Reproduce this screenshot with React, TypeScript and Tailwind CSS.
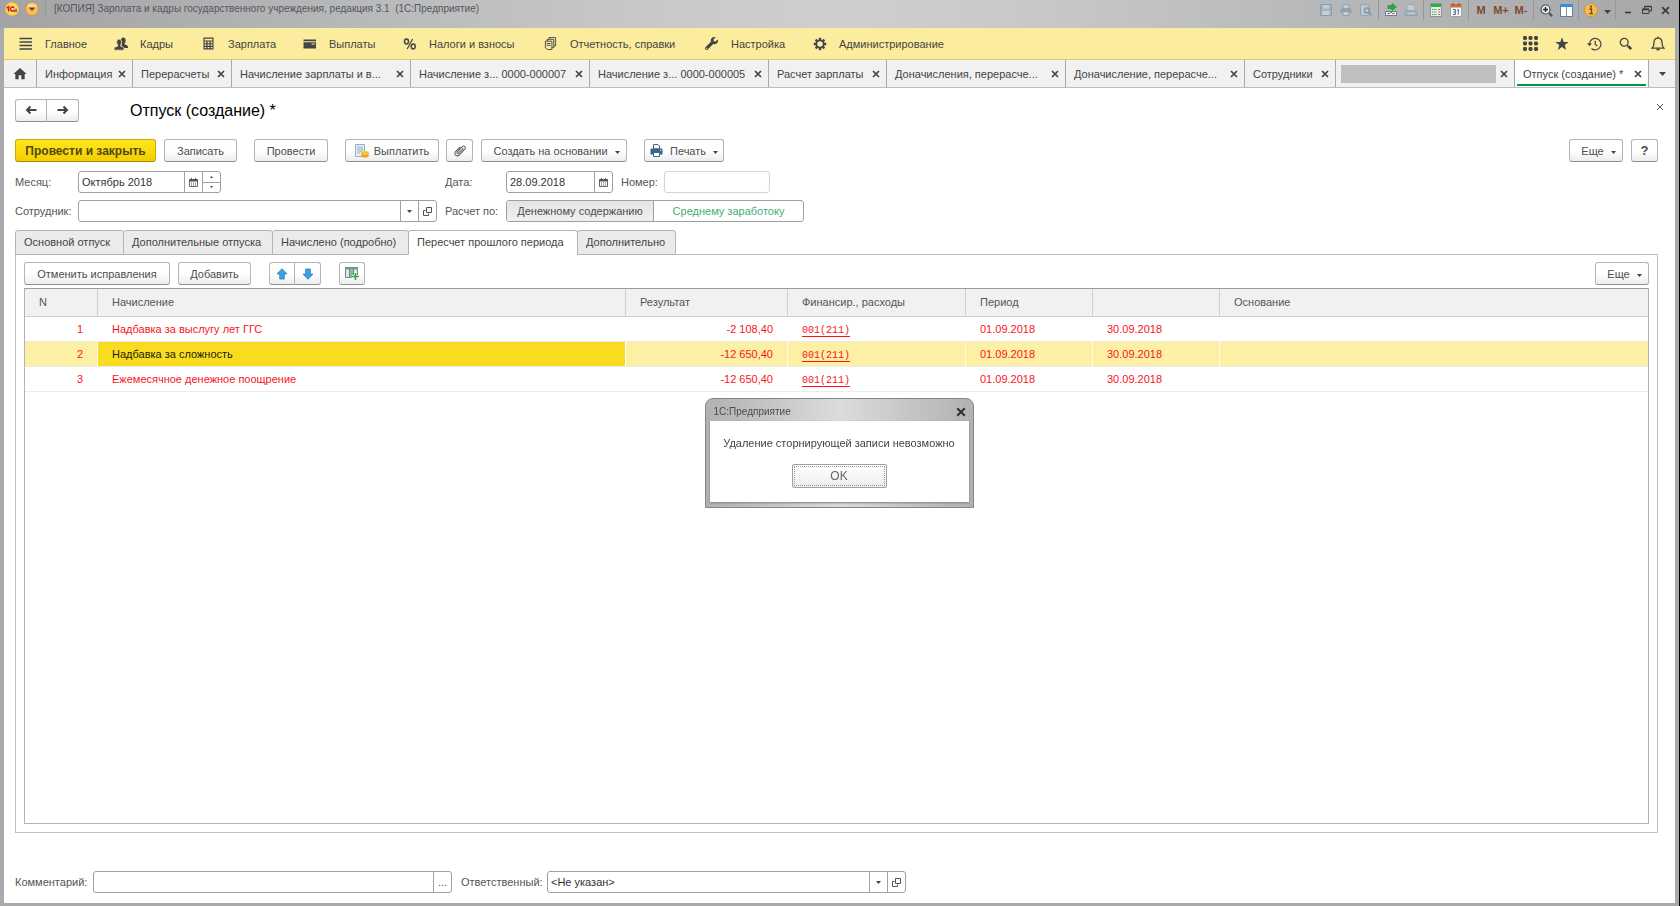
import clsx from "clsx";
import { useState, type ReactNode } from "react";
import { FaWrench } from "react-icons/fa";
import { MdHome } from "react-icons/md";

const menuItems = [
  { title: "Главное", icon: <LinesIcon />, width: "w-[95px]" },
  { title: "Кадры", icon: <PeopleIcon />, width: "w-[88px]" },
  { title: "Зарплата", icon: <CalcIcon />, width: "w-[101px]" },
  { title: "Выплаты", icon: <CardIcon />, width: "w-[100px]" },
  { title: "Налоги и взносы", icon: <PercentIcon />, width: "w-[141px]" },
  { title: "Отчетность, справки", icon: <DocsIcon />, width: "w-[161px]" },
  { title: "Настройка", icon: <FaWrench className="h-[13px] w-[13px]" />, width: "w-[108px]" },
  { title: "Администрирование", icon: <GearIcon />, width: "w-[160px]" },
];

const openWindows = [
  { title: "Информация", width: "w-24" },
  { title: "Перерасчеты", width: "w-[99px]" },
  { title: "Начисление зарплаты и в...", width: "w-[179px]" },
  { title: "Начисление з... 0000-000007", width: "w-[179px]" },
  { title: "Начисление з... 0000-000005", width: "w-[179px]" },
  { title: "Расчет зарплаты", width: "w-[118px]" },
  { title: "Доначисления, перерасче...", width: "w-[179px]" },
  { title: "Доначисление, перерасче...", width: "w-[179px]" },
  { title: "Сотрудники", width: "w-[91px]" },
  { title: "", width: "w-[179px]" },
  { title: "Отпуск (создание) *", width: "w-[134px]", active: true },
];

const pages = [
  { title: "Основной отпуск", width: "w-[109px]" },
  { title: "Дополнительные отпуска", width: "w-[150px]" },
  { title: "Начислено (подробно)", width: "w-[137px]" },
  { title: "Пересчет прошлого периода", width: "w-[170px]" },
  { title: "Дополнительно", width: "w-[99px]" },
];

const rows = [
  { n: 1, name: "Надбавка за выслугу лет ГГС", sum: "-2 108,40" },
  { n: 2, name: "Надбавка за сложность", sum: "-12 650,40" },
  { n: 3, name: "Ежемесячное денежное поощрение", sum: "-12 650,40" },
];

function LinesIcon() {
  return (
    <svg viewBox="0 0 14 14" className="h-3.5 w-3.5" stroke="currentColor" strokeWidth="1.6">
      <path d="M0.5 1.5h12.5M0.5 5h12.5M0.5 8.5h12.5M0.5 12h12.5" />
    </svg>
  );
}

function PeopleIcon() {
  return (
    <svg viewBox="0 0 14 14" className="h-3.5 w-3.5" fill="currentColor">
      <ellipse cx="9.3" cy="3.4" rx="2.3" ry="2.9" />
      <path d="M8.2 5h2.4v2.200l2.600 1.300q.8.400.8 1.300v1.200H7z" />
      <g stroke="#fbec9e" strokeWidth="0.8">
        <path d="M3.900 7h2.400v2l2.900 1.200q.8.400.8 1.300v1.700H0.100v-1.700q0-.9.8-1.300L3.900 9z" />
        <ellipse cx="5.100" cy="5.200" rx="2.500" ry="3.100" />
      </g>
      <path d="M4 6.500h2.200v3H4z" />
    </svg>
  );
}

function CalcIcon() {
  return (
    <svg viewBox="0 0 12 14" className="ml-px h-[13px] w-[11px]" fill="currentColor">
      <path
        fillRule="evenodd"
        d="M0.5 0.5h11v13h-11zM1.7 1.7v2h8.6v-2zM1.7 4.9v1.7h1.9v-1.7zM5 4.9v1.7h2v-1.7zM8.4 4.9v1.7h1.9v-1.7zM1.7 7.8v1.7h1.9v-1.7zM5 7.8v1.7h2v-1.7zM8.4 7.8v1.7h1.9v-1.7zM1.7 10.7v1.6h1.9v-1.6zM5 10.7v1.6h2v-1.6zM8.4 10.7v1.6h1.9v-1.6z"
      />
    </svg>
  );
}

function CardIcon() {
  return (
    <svg viewBox="0 0 14 14" className="h-3.5 w-3.5" fill="currentColor">
      <path d="M0.5 2.5h12.5v1.800h-12.5zM0.5 5.200h12.5v6.300h-12.5z" />
      <path d="M8.500 7h3.200" stroke="#fbec9e" strokeWidth="1" />
    </svg>
  );
}

function PercentIcon() {
  return (
    <svg viewBox="0 0 14 14" className="h-3.5 w-3.5" fill="none" stroke="currentColor">
      <ellipse cx="3.5" cy="4.5" rx="2" ry="2.400" strokeWidth="1.500" />
      <ellipse cx="10.2" cy="9.500" rx="2" ry="2.400" strokeWidth="1.500" />
      <path d="M9.600 2L4.200 12" strokeWidth="1.200" />
    </svg>
  );
}

function DocsIcon() {
  return (
    <svg viewBox="0 0 14 14" className="h-[13px] w-[13px]" fill="none" stroke="currentColor">
      <path d="M1.5 4.5h7v9h-5l-2-2z" />
      <path d="M3.5 4.5v-2h7v9h-2M5.5 2.5v-2h7v9h-2" />
      <path d="M3 7h4M3 9h4" />
    </svg>
  );
}

function GearIcon() {
  return (
    <svg viewBox="0 0 14 14" className="h-3.5 w-3.5" fill="none" stroke="currentColor">
      <circle cx="7" cy="7" r="3.700" strokeWidth="1.800" />
      <path
        strokeWidth="2.300"
        d="M7 0.800v2.500M7 10.700v2.500M0.800 7h2.500M10.700 7h2.500M2.600 2.600l1.800 1.800M9.600 9.600l1.800 1.800M11.400 2.600L9.600 4.400M4.400 9.600l-1.800 1.800"
      />
    </svg>
  );
}

function Caret({ className = "h-[3px] w-[5px]" }: { className?: string }) {
  return (
    <svg viewBox="0 0 5 3" preserveAspectRatio="none" className={clsx("shrink-0", className)} fill="#444">
      <path d="M0 0h5L2.5 3z" />
    </svg>
  );
}

function CrossIcon({ className }: { className: string }) {
  return (
    <svg viewBox="0 0 8 8" className={className} stroke="currentColor" fill="none">
      <path d="M1 1l6 6M7 1L1 7" />
    </svg>
  );
}

function CalendarIcon() {
  return (
    <svg viewBox="0 0 9 9" className="h-[9px] w-[9px]">
      <path d="M0.5 1.5h8v7h-8z" fill="#fff" stroke="#666" />
      <path d="M0.5 1h8v2.500h-8z" fill="#555" />
      <path d="M2.5 0v2M6.5 0v2" stroke="#555" />
      <path d="M2 5h1M4 5h1M6 5h1M2 7h1M4 7h1M6 7h1" stroke="#555" />
    </svg>
  );
}

function OpenIcon() {
  return (
    <svg viewBox="0 0 9 9" className="h-[9px] w-[9px]" fill="none" stroke="#555">
      <path d="M3.5 0.5h5v5h-5z" />
      <path d="M2.5 3.5h-2v5h5v-2" />
    </svg>
  );
}

function TitleBar() {
  const slot = "flex h-4 w-5 shrink-0 items-center justify-center";
  const separator = <span className="mx-[2px] h-5 w-px shrink-0 bg-[#969799]" />;

  return (
    <header className="flex h-7 items-start bg-[linear-gradient(90deg,#a3a3a5_0%,#b6b7b9_20%,#c8c8c8_38%,#cfcfcf_50%,#c8c8c8_62%,#b6b7b9_80%,#a6a7a9_100%)] pr-1 pl-[5px]">
      <svg viewBox="0 0 14 14" className="mt-[2px] h-3.5 w-3.5 shrink-0">
        <defs>
          <radialGradient id="logo">
            <stop offset="0" stopColor="#fff7a0" />
            <stop offset="1" stopColor="#f6cf3a" />
          </radialGradient>
        </defs>
        <circle cx="7" cy="7" r="6.8" fill="url(#logo)" />
        <path d="M1.8 6.2L3.6 4.800V9.400" fill="none" stroke="#d8181c" strokeWidth="1.500" />
        <path d="M9 5.900C8.400 4.500 5.500 4.700 5.500 7S7 9 8.300 9H12" fill="none" stroke="#d8181c" strokeWidth="1.500" />
        <path d="M8.300 7.200H12" stroke="#d8181c" strokeWidth=".7" />
      </svg>
      <button type="button" aria-label="Главное меню" className="mt-[2px] ml-[6px] shrink-0">
        <svg viewBox="0 0 14 14" className="h-3.5 w-3.5">
          <circle cx="7" cy="7" r="6.5" fill="#f5bd5c" stroke="#dc9a3c" />
          <ellipse cx="7" cy="4" rx="4.5" ry="2.5" fill="#fad998" />
          <path d="M3.8 5.5h6.4L7 9z" fill="#5f4317" />
        </svg>
      </button>
      <span className="ml-[6px] h-4 w-px bg-[#979797]" />
      <h1 className="ml-2 min-w-0 flex-1 truncate text-[10px] leading-[18px] whitespace-pre text-[#55575a]">
        [КОПИЯ] Зарплата и кадры государственного учреждения, редакция 3.1  (1С:Предприятие)
      </h1>
      <div className="flex items-center text-[#3c3c3c]">
        <button type="button" aria-label="Сохранить" className={slot}>
          <svg viewBox="0 0 12 12" className="h-3 w-3">
            <path d="M0.5 0.5h11v11h-11z" fill="#a3b3c0" stroke="#8b9dab" />
            <path d="M3 1h6v3.5H3zM2.5 7h7v4h-7z" fill="#c6ced5" />
          </svg>
        </button>
        <button type="button" aria-label="Печать" className={slot}>
          <svg viewBox="0 0 12 12" className="h-3 w-3">
            <path d="M3 0.5h6v4H3z" fill="#c6ced5" stroke="#8fa0ae" />
            <path d="M0.5 4.5h11V9h-11z" fill="#90a2b0" />
            <path d="M3 7.5h6v4H3z" fill="#c6ced5" stroke="#8fa0ae" />
          </svg>
        </button>
        <button type="button" aria-label="Предварительный просмотр" className={slot}>
          <svg viewBox="0 0 12 12" className="h-3 w-3" fill="none">
            <path d="M0.5 0.5H7l2 2v9H0.5z" fill="#c0c7cd" stroke="#96a4b0" />
            <circle cx="7" cy="6.5" r="2.5" stroke="#8496a5" strokeWidth="1.4" />
            <path d="M9 8.5l2.5 2.8" stroke="#8496a5" strokeWidth="1.6" />
          </svg>
        </button>
        {separator}
        <button type="button" aria-label="Получить ссылку" className={slot}>
          <svg viewBox="0 0 14 14" className="h-3.5 w-3.5">
            <path d="M1.5 8.5h11v4h-11z" fill="#eef2f4" stroke="#6f7c86" />
            <path d="M3.5 10.5h2l1-1h1l1 1h2" fill="none" stroke="#56636d" />
            <path d="M4 2.5h4v-2L12.5 4 8 7.5v-2H4z" fill="#1fb43a" stroke="#168a2b" strokeWidth=".6" />
          </svg>
        </button>
        <button type="button" aria-label="Перейти по ссылке" className={slot}>
          <svg viewBox="0 0 14 14" className="h-3.5 w-3.5">
            <path d="M3 1.5h6l2 2V8H3z" fill="#c4cbd1" stroke="#9aa8b3" />
            <path d="M1 8h12v4.500H1z" fill="#a8b4be" stroke="#91a0ac" />
            <path d="M4 10.5h6" stroke="#c9d0d5" />
          </svg>
        </button>
        {separator}
        <button type="button" aria-label="Калькулятор" className={slot}>
          <svg viewBox="0 0 12 14" className="h-3.5 w-3">
            <path d="M0.5 0.5h11v13h-11z" fill="#eceff0" stroke="#8d9599" />
            <path d="M1 1h10v3H1z" fill="#2fae4b" />
            <path d="M2 6.5h5M2 9h5M2 11.5h5" stroke="#4a8f5c" strokeDasharray="1.5 .7" />
            <path d="M8.3 6.5h2M8.3 9h2M8.3 11.5h2" stroke="#b3663f" />
          </svg>
        </button>
        <button type="button" aria-label="Календарь" className={slot}>
          <svg viewBox="0 0 12 14" className="h-3.5 w-3">
            <path d="M0.5 1.5h11v12h-11z" fill="#f7f8fa" stroke="#9aa4ad" />
            <path d="M0.5 1h11v3.5h-11z" fill="#c9713b" />
            <path d="M3 0v2.5M9 0v2.5" stroke="#8e4a22" />
            <path d="M3 6.5h2.300v5H3M3.500 9h1.800M7 7.500l1.300-1v5" fill="none" stroke="#4a6785" />
          </svg>
        </button>
        {separator}
        {["M", "M+", "M-"].map((title) => (
          <button
            key={title}
            type="button"
            className="h-4 w-5 text-[11px] leading-4 font-bold text-[#7d4a2b]"
          >
            {title}
          </button>
        ))}
        {separator}
        <button type="button" aria-label="Масштаб" className={slot}>
          <svg viewBox="0 0 13 13" className="h-[13px] w-[13px]" fill="none">
            <circle cx="5.5" cy="5.5" r="4.5" fill="#f2f3f4" stroke="#4b4f53" strokeWidth="1.2" />
            <path d="M3 5.5h5M5.5 3v5" stroke="#222" strokeWidth="1.4" />
            <path d="M9 9l3.2 3.2" stroke="#4b4f53" strokeWidth="2" />
          </svg>
        </button>
        <button type="button" aria-label="Разделить окно" className={slot}>
          <svg viewBox="0 0 13 13" className="h-[13px] w-[13px]">
            <path d="M0.5 0.5h12v12h-12z" fill="#fff" stroke="#5b7fa5" />
            <path d="M0.5 0.5h12V3h-12z" fill="#3590e0" />
            <path d="M6.5 3v9.5" stroke="#7c99b8" />
          </svg>
        </button>
        {separator}
        <button type="button" aria-label="О программе" className={slot}>
          <svg viewBox="0 0 14 14" className="h-3.5 w-3.5">
            <circle cx="7" cy="7" r="6.5" fill="#f3bb52" stroke="#d6952f" />
            <circle cx="7" cy="3.7" r="1.1" fill="#6b4a12" />
            <path d="M5.5 6h2v4.500M5.300 10.700h3.600" stroke="#6b4a12" strokeWidth="1.300" fill="none" />
          </svg>
        </button>
        <button type="button" aria-label="Еще" className="flex h-5 w-3 items-center justify-center pt-1">
          <Caret className="h-1 w-[7px]" />
        </button>
        {separator}
        <button type="button" aria-label="Свернуть" className="flex h-4 w-[19px] items-center justify-center">
          <svg viewBox="0 0 10 10" className="h-2.5 w-2.5" stroke="currentColor" strokeWidth="1.6">
            <path d="M2 7.5h6" />
          </svg>
        </button>
        <button type="button" aria-label="Восстановить" className="flex h-4 w-[19px] items-center justify-center">
          <svg viewBox="0 0 10 10" className="h-2.5 w-2.5" stroke="currentColor" fill="none">
            <path d="M0.5 4H7v4.500H0.500zM2.500 4V1.500h7V6H7" />
            <path d="M0.5 4.500H7M2.500 1.500h7" strokeWidth="1.600" />
          </svg>
        </button>
        <button type="button" aria-label="Закрыть" className="flex h-4 w-[19px] items-center justify-center">
          <CrossIcon className="h-[9px] w-[9px] [stroke-width:1.6]" />
        </button>
      </div>
    </header>
  );
}

function SectionsBar() {
  const tool = "flex w-8 items-center justify-center";

  return (
    <nav className="flex h-8 items-center justify-between border-b border-[#dccb6e] bg-[#fbec9e] pr-px pl-[15px] text-[#444]">
      <div className="flex">
        {menuItems.map((item) => (
          <button key={item.title} type="button" className={clsx("flex items-center whitespace-nowrap", item.width)}>
            <span className="flex w-[26px] shrink-0 items-center">{item.icon}</span>
            {item.title}
          </button>
        ))}
      </div>
      <div className="flex">
        <button type="button" aria-label="Меню функций" className={tool}>
          <svg viewBox="0 0 15 15" className="h-[15px] w-[15px]" fill="currentColor">
            {[0, 5.5, 11].map((y) =>
              [0, 5.5, 11].map((x) => <rect key={`${x}-${y}`} x={x} y={y} width="4" height="4" rx="1.4" />),
            )}
          </svg>
        </button>
        <button type="button" aria-label="Избранное" className={tool}>
          <svg viewBox="0 0 14 14" className="h-3.5 w-3.5" fill="currentColor">
            <path d="M7 0.3L8.700 5h5L9.700 8l1.500 5L7 10.100 2.800 13l1.500-5L.3 5h5z" />
          </svg>
        </button>
        <button type="button" aria-label="История" className={tool}>
          <svg viewBox="0 0 15 14" className="h-3.5 w-[15px]" fill="none" stroke="currentColor" strokeWidth="1.2">
            <path d="M2.5 7a5.700 5.700 0 1 1 2 4.500" />
            <path d="M8.2 3.800v3.600l2.200 1.500" />
            <path d="M0 6.200h5L2.500 9.200z" fill="currentColor" stroke="none" />
          </svg>
        </button>
        <button type="button" aria-label="Поиск" className={tool}>
          <svg viewBox="0 0 14 14" className="h-3.5 w-3.5" fill="none" stroke="currentColor">
            <circle cx="5.2" cy="5.2" r="3.900" strokeWidth="1.300" />
            <path d="M8 8l1.500 1.500" strokeWidth="1.400" />
            <path d="M9.200 9.200l3 3" strokeWidth="2.600" />
          </svg>
        </button>
        <button type="button" aria-label="Уведомления" className={tool}>
          <svg viewBox="0 0 14 15" className="h-[15px] w-3.5" fill="none" stroke="currentColor" strokeWidth="1.3">
            <path d="M1 12.200c1.800-1.400 2-2.900 2-5.400C3 4.200 4.500 2.200 7 2.200s4 2 4 4.600c0 2.500.2 4 2 5.400z" />
            <path d="M7 0.500V2" />
            <path d="M5.500 13.500h3" strokeWidth="1.800" />
          </svg>
        </button>
      </div>
    </nav>
  );
}

function WindowTabs() {
  return (
    <div className="flex h-7 border-b border-[#bdbdbd] bg-[#f1f1f1] text-[#444]">
      <button
        type="button"
        aria-label="Начальная страница"
        className="flex w-[33px] shrink-0 items-center justify-center border-r border-[#a9a9a9]"
      >
        <MdHome className="h-4 w-4" />
      </button>
      {openWindows.map((item, index) => (
        <div
          key={index}
          className={clsx(
            "relative flex shrink items-center justify-between border-r border-[#a9a9a9] pr-[5px] pl-2",
            item.width,
            item.active && "bg-white",
          )}
        >
          {item.title ? (
            <button type="button" className="whitespace-nowrap">
              {item.title}
            </button>
          ) : (
            <span className="-ml-[3px] h-[18px] w-[155px] bg-[#c0c0c0]" />
          )}
          <button type="button" aria-label="Закрыть вкладку" className="p-px">
            <CrossIcon className="h-2 w-2 [stroke-width:1.7]" />
          </button>
          {item.active && <span className="absolute inset-x-[2px] bottom-px h-[2px] bg-[#009646]" />}
        </div>
      ))}
      <button type="button" aria-label="Все вкладки" className="flex flex-1 items-center justify-center">
        <Caret className="h-1 w-[7px]" />
      </button>
    </div>
  );
}

type ButtonProps = {
  children: ReactNode;
  className?: string;
  label?: string;
  menu?: boolean;
  primary?: boolean;
};

function Button({ children, className, label, menu, primary }: ButtonProps) {
  return (
    <button
      type="button"
      aria-label={label}
      className={clsx(
        "flex h-[23px] shrink-0 items-center justify-center rounded-[3px] border whitespace-nowrap",
        primary
          ? "border-[#c9a800] border-b-[#a38a0c] bg-linear-to-b from-[#ffe61a] to-[#f3cf00] text-xs font-bold text-[#54480c]"
          : "border-[#b4b4b4] border-b-[#8f8f8f] bg-linear-to-b from-white from-50% to-[#ededed] text-[#4d4d4d]",
        className,
      )}
    >
      {children}
      {menu && <Caret className="mt-[3px] ml-[7px] h-[3px] w-[5px]" />}
    </button>
  );
}

type FieldProps = {
  id: string;
  value?: string;
  className: string;
  children?: ReactNode;
  muted?: boolean;
};

function Field({ id, value = "", className, children, muted }: FieldProps) {
  return (
    <div
      className={clsx(
        "flex h-[22px] shrink-0 overflow-hidden rounded-[3px] border bg-white",
        muted ? "border-[#d4d4d4]" : "border-[#a0a0a0]",
        className,
      )}
    >
      <input id={id} defaultValue={value} className="min-w-0 flex-1 px-[3px] text-[#333] outline-none" />
      {children}
    </div>
  );
}

function FieldButton({ label, children }: { label: string; children: ReactNode }) {
  return (
    <button
      type="button"
      aria-label={label}
      className="flex w-[18px] shrink-0 items-center justify-center border-l border-[#a0a0a0] text-[#555]"
    >
      {children}
    </button>
  );
}

function CommandBar() {
  return (
    <div className="mt-[18px] flex">
      <Button primary className="w-[141px]">
        Провести и закрыть
      </Button>
      <Button className="ml-2 w-[73px]">Записать</Button>
      <Button className="ml-[17px] w-[74px]">Провести</Button>
      <Button className="ml-[17px] w-[94px]">
        <svg viewBox="0 0 14 14" className="mr-[5px] h-3.5 w-3.5">
          <path d="M0.5 0.5h9v12h-9z" fill="#eaf3fa" stroke="#8fb0c8" />
          <path d="M2 3h6M2 5h6M2 7h6M2 9h3" stroke="#8fb0c8" />
          <ellipse cx="10" cy="11.5" rx="3.7" ry="2" fill="#e3a21a" />
          <ellipse cx="10" cy="9.5" rx="3.7" ry="2" fill="#f7c93e" stroke="#d99a1c" strokeWidth=".6" />
          <ellipse cx="8.500" cy="7.800" rx="2.200" ry="1.100" fill="#fde28a" stroke="#d99a1c" strokeWidth=".5" />
        </svg>
        Выплатить
      </Button>
      <Button label="Присоединенные файлы" className="ml-[7px] w-[27px]">
        <svg viewBox="0 0 14 14" className="h-3.5 w-3.5" fill="none" stroke="#666" strokeWidth="1.1">
          <path d="M10.3 4.3L5.600 9.200c-.9.900-2.200-.3-1.300-1.300l5-5.200c1.700-1.700 4.200.5 2.600 2.300L6.200 11c-2.300 2.300-5.900-.8-3.600-3.300L7.300 3" />
        </svg>
      </Button>
      <Button menu className="ml-2 w-[146px] pl-[5px]">
        Создать на основании
      </Button>
      <Button menu className="ml-[17px] w-20">
        <svg viewBox="0 0 13 13" className="mr-[7px] h-[13px] w-[13px]">
          <path d="M3.5 0.5H8L9.500 2v3h-6z" fill="#fff" stroke="#3c6489" />
          <path d="M0.5 5.500q0-1 1-1h10q1 0 1 1v5h-12z" fill="#3c6489" />
          <path d="M3.5 8.500h6v4h-6z" fill="#fff" stroke="#3c6489" />
          <path d="M10 6.200h1.200" stroke="#fff" />
        </svg>
        Печать
      </Button>
      <Button menu className="ml-auto w-[54px] pl-[5px]">
        Еще
      </Button>
      <Button className="ml-2 w-[27px] text-[13px] font-bold">?</Button>
    </div>
  );
}

function HeaderFields() {
  const [basis, setBasis] = useState("salary");

  return (
    <>
      <div className="mt-[9px] flex items-center gap-2">
        <div className="flex w-[422px] shrink-0 items-center">
          <label htmlFor="month" className="w-[63px]">
            Месяц:
          </label>
          <Field id="month" value="Октябрь 2018" className="w-[143px]">
            <FieldButton label="Выбрать месяц">
              <CalendarIcon />
            </FieldButton>
            <div className="flex w-[18px] flex-col border-l border-[#a0a0a0]">
              <button
                type="button"
                aria-label="Следующий месяц"
                className="flex flex-1 items-center justify-center border-b border-[#a0a0a0]"
              >
                <Caret className="h-[2px] w-[3px] rotate-180" />
              </button>
              <button type="button" aria-label="Предыдущий месяц" className="flex flex-1 items-center justify-center">
                <Caret className="h-[2px] w-[3px]" />
              </button>
            </div>
          </Field>
        </div>
        <div className="flex items-center">
          <label htmlFor="date" className="w-[61px]">
            Дата:
          </label>
          <Field id="date" value="28.09.2018" className="w-[107px]">
            <FieldButton label="Выбрать дату">
              <CalendarIcon />
            </FieldButton>
          </Field>
        </div>
        <div className="flex items-center">
          <label htmlFor="number" className="w-[43px]">
            Номер:
          </label>
          <Field id="number" muted className="w-[106px]" />
        </div>
      </div>
      <div className="mt-[7px] flex items-center gap-2">
        <div className="flex w-[422px] shrink-0 items-center">
          <label htmlFor="employee" className="w-[63px]">
            Сотрудник:
          </label>
          <Field id="employee" className="flex-1">
            <FieldButton label="Выбрать сотрудника">
              <Caret />
            </FieldButton>
            <FieldButton label="Открыть сотрудника">
              <OpenIcon />
            </FieldButton>
          </Field>
        </div>
        <fieldset className="flex items-center">
          <legend className="float-left w-[61px]">Расчет по:</legend>
          <div className="flex h-[22px] overflow-hidden rounded-[3px] border border-[#a0a0a0]">
            <label
              className={clsx(
                "flex w-[147px] items-center justify-center border-r border-[#a0a0a0]",
                basis === "salary" ? "bg-linear-to-b from-[#e4e4e4] to-[#f0f0f0] text-[#4d4d4d]" : "text-[#3fae73]",
              )}
            >
              <input
                type="radio"
                name="basis"
                className="sr-only"
                checked={basis === "salary"}
                onChange={() => setBasis("salary")}
              />
              Денежному содержанию
            </label>
            <label
              className={clsx(
                "flex w-[149px] items-center justify-center",
                basis === "average" ? "bg-linear-to-b from-[#e4e4e4] to-[#f0f0f0] text-[#4d4d4d]" : "text-[#3fae73]",
              )}
            >
              <input
                type="radio"
                name="basis"
                className="sr-only"
                checked={basis === "average"}
                onChange={() => setBasis("average")}
              />
              Среднему заработоку
            </label>
          </div>
        </fieldset>
      </div>
    </>
  );
}

function RecalcTable() {
  const [selected, setSelected] = useState(2);
  const head = "border-r border-b border-[#cfcfcf] px-[14px] pb-[2px] text-left font-normal last:border-r-0";
  const cell = "border-r border-b border-r-transparent border-b-[#ebebeb] px-[14px] last:border-r-0";

  return (
    <div className="mt-[3px] flex-1 border border-[#b3b3b3] border-t-[#9c9c9c]">
      <table className="w-full table-fixed border-separate border-spacing-0 whitespace-nowrap">
        <colgroup>
          <col className="w-[73px]" />
          <col className="w-[528px]" />
          <col className="w-[162px]" />
          <col className="w-[178px]" />
          <col className="w-[127px]" />
          <col className="w-[127px]" />
          <col />
        </colgroup>
        <thead className="bg-[#f1f1f1] text-[#555]">
          <tr className="h-7">
            <th className={head}>N</th>
            <th className={head}>Начисление</th>
            <th className={head}>Результат</th>
            <th className={head}>Финансир., расходы</th>
            <th className={head}>Период</th>
            <th className={head} />
            <th className={head}>Основание</th>
          </tr>
        </thead>
        <tbody className="text-[#f9131b]">
          {rows.map((row) => {
            const active = row.n === selected;
            const tone = active && "border-r-white/70! bg-[#fdf0a4]";
            return (
              <tr key={row.n} className="h-[25px]" onClick={() => setSelected(row.n)}>
                <td className={clsx(cell, tone, "text-right")}>{row.n}</td>
                <td className={clsx(cell, active && "border-r-white! bg-[#f9db20] text-[#1f1c05]")}>{row.name}</td>
                <td className={clsx(cell, tone, "text-right")}>{row.sum}</td>
                <td className={clsx(cell, tone)}>
                  <a
                    href="#financing"
                    className="inline-block border-b border-current font-['Liberation_Mono',monospace] text-[10px] leading-[11px]"
                  >
                    001(211)
                  </a>
                </td>
                <td className={clsx(cell, tone)}>01.09.2018</td>
                <td className={clsx(cell, tone)}>30.09.2018</td>
                <td className={clsx(cell, tone)} />
              </tr>
            );
          })}
        </tbody>
      </table>
    </div>
  );
}

function RecalcPage() {
  return (
    <section className="flex flex-1 flex-col border border-[#c0c0c0] px-2 pt-[7px] pb-2">
      <div className="flex">
        <Button className="w-[146px]">Отменить исправления</Button>
        <Button className="ml-2 w-[73px]">Добавить</Button>
        <div className="ml-[18px] flex">
          <Button label="Переместить вверх" className="w-[26px] rounded-r-none">
            <svg viewBox="0 0 12 12" className="h-3 w-3">
              <path d="M6 0.7L11 6H8.300v5H3.700V6H1z" fill="#3ba3e4" stroke="#2481bf" strokeWidth=".8" />
            </svg>
          </Button>
          <Button label="Переместить вниз" className="w-[26px] rounded-l-none border-l-0">
            <svg viewBox="0 0 12 12" className="h-3 w-3">
              <path d="M6 11.300L11 6H8.300V1H3.700v5H1z" fill="#3ba3e4" stroke="#2481bf" strokeWidth=".8" />
            </svg>
          </Button>
        </div>
        <Button label="Показать детали расчета" className="ml-[18px] w-[26px]">
          <svg viewBox="0 0 14 13" className="h-[13px] w-3.5">
            <path d="M0.5 0.5h12v10h-12z" fill="#dbe8ef" stroke="#6d8798" />
            <path d="M0.5 1h12v1.500h-12z" fill="#7e98a8" />
            <path d="M5 2.500h3.500v8H5z" fill="#7cc47f" />
            <path d="M4.500 1v9.500M8.500 1v9.500" stroke="#6d8798" />
            <path d="M10.500 5.500V13M7 9.500h7" stroke="#fff" strokeWidth="3" />
            <path d="M10.500 6v7M7 9.500h7" stroke="#2fa32f" strokeWidth="1.700" />
          </svg>
        </Button>
        <Button menu className="ml-auto w-[54px] pl-[5px]">
          Еще
        </Button>
      </div>
      <RecalcTable />
    </section>
  );
}

function MessageDialog({ onClose }: { onClose: () => void }) {
  return (
    <div className="fixed inset-0 flex items-center justify-center pr-[2px]">
      <div
        role="dialog"
        aria-label="1С:Предприятие"
        className="rounded-t-lg border border-[#858585] bg-[linear-gradient(90deg,#b0b1b3,#dcdcdc_50%,#b0b1b3)] px-1 pb-[5px]"
      >
        <div className="flex h-[22px] items-center justify-between pt-[3px] pr-[3px] pl-1 text-[10px] text-[#4a4a4a]">
          1С:Предприятие
          <button type="button" aria-label="Закрыть" onClick={onClose} className="text-[#2e2e2e]">
            <CrossIcon className="h-[10px] w-[10px] [stroke-width:1.6]" />
          </button>
        </div>
        <div className="flex h-[81px] w-[259px] flex-col items-center bg-white shadow-[0_1px_2px_#808080]">
          <p className="mt-[14px] leading-4 whitespace-nowrap text-[#444]">Удаление сторнирующей записи невозможно</p>
          <button
            type="button"
            onClick={onClose}
            className="mt-[13px] h-6 w-[95px] rounded-[2px] border border-[#a0a0a0] bg-linear-to-b from-white to-[#ededed] p-px text-[#666]"
          >
            <span className="flex h-full items-center justify-center border border-dotted border-[#999] text-xs">
              OK
            </span>
          </button>
        </div>
      </div>
    </div>
  );
}

export default function App() {
  const [dialogOpen, setDialogOpen] = useState(true);
  const [page, setPage] = useState(3);

  return (
    <div className="min-h-screen border-r border-black bg-[#a9aaac] pr-1 pb-[3px] pl-1 font-['Liberation_Sans',Arial,sans-serif] text-[11px] leading-4">
      <div className="-mx-1">
        <TitleBar />
      </div>
      <div className="flex min-h-[calc(100vh-31px)] flex-col bg-white">
        <SectionsBar />
        <WindowTabs />
        <main className="flex flex-1 flex-col pt-[11px] pr-[17px] pb-[10px] pl-[11px] text-[#555]">
          <div className="flex h-[22px] items-center">
            <div className="flex">
              <Button label="Назад" className="h-[22px] w-8 rounded-r-none">
                <svg viewBox="0 0 12 10" className="h-2.5 w-3" fill="none" stroke="#444" strokeWidth="2">
                  <path d="M2 5h9.500M5.500 1.500L2 5l3.500 3.500" />
                </svg>
              </Button>
              <Button label="Вперед" className="h-[22px] w-8 rounded-l-none border-l-0">
                <svg viewBox="0 0 12 10" className="h-2.5 w-3" fill="none" stroke="#444" strokeWidth="2">
                  <path d="M10 5H0.500M6.500 1.500L10 5 6.500 8.500" />
                </svg>
              </Button>
            </div>
            <h2 className="ml-[51px] pt-[2px] text-base text-black">Отпуск (создание) *</h2>
            <button type="button" aria-label="Закрыть" className="mr-[-6px] mb-[6px] ml-auto">
              <CrossIcon className="h-2 w-2" />
            </button>
          </div>
          <CommandBar />
          <HeaderFields />
          <div role="tablist" className="relative mt-2 -mb-px flex">
            {pages.map((item, index) => (
              <button
                key={item.title}
                type="button"
                role="tab"
                aria-selected={index === page}
                onClick={() => setPage(index)}
                className={clsx(
                  "-mr-px h-[25px] rounded-t-[3px] border border-[#b3b3b3] pb-px pl-2 text-left whitespace-nowrap text-[#444]",
                  index === page ? "border-b-white bg-white" : "bg-[#ebebeb]",
                  item.width,
                )}
              >
                {item.title}
              </button>
            ))}
          </div>
          <RecalcPage />
          <div className="mt-[38px] flex items-center">
            <label htmlFor="comment" className="w-[78px]">
              Комментарий:
            </label>
            <Field id="comment" className="w-[359px]">
              <FieldButton label="Изменить комментарий">...</FieldButton>
            </Field>
            <label htmlFor="responsible" className="ml-[9px] w-[86px]">
              Ответственный:
            </label>
            <Field id="responsible" value="<Не указан>" className="w-[359px]">
              <FieldButton label="Выбрать ответственного">
                <Caret />
              </FieldButton>
              <FieldButton label="Открыть ответственного">
                <OpenIcon />
              </FieldButton>
            </Field>
          </div>
        </main>
      </div>
      {dialogOpen && <MessageDialog onClose={() => setDialogOpen(false)} />}
    </div>
  );
}
